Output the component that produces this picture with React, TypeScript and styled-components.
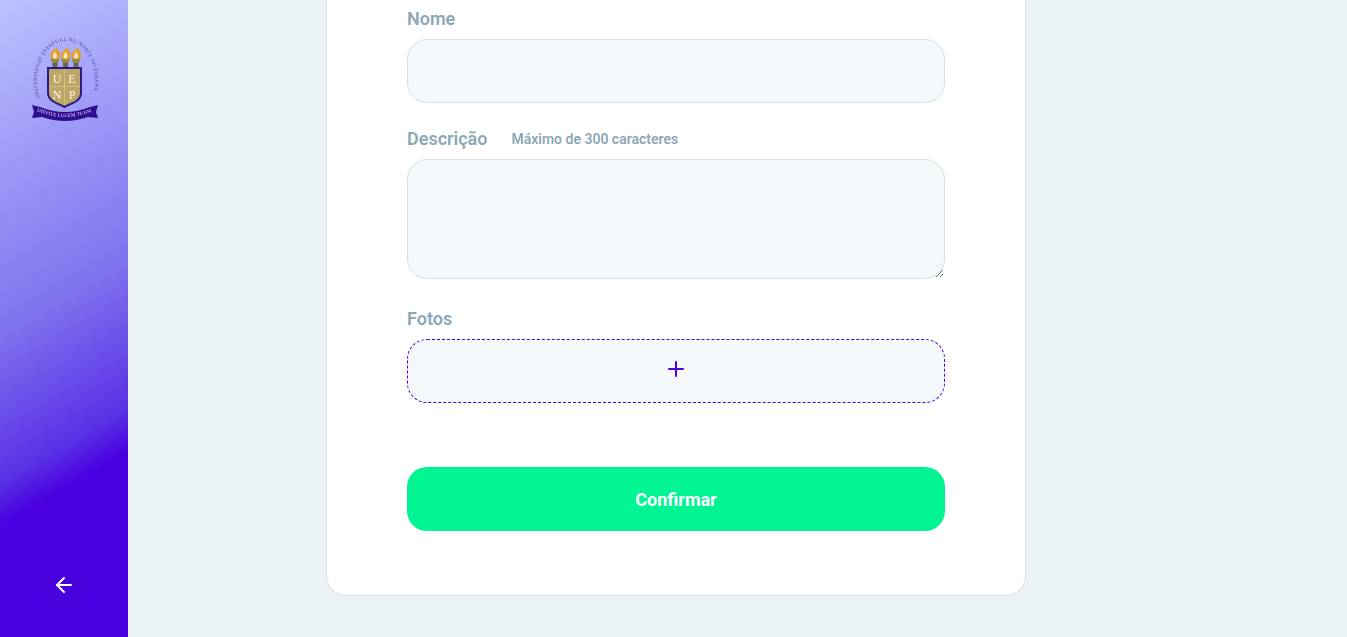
import React from 'react';
import styled, { createGlobalStyle } from 'styled-components';
import { ArrowLeft, Plus } from 'lucide-react';

const GlobalStyle = createGlobalStyle`
    * {
        box-sizing: border-box;
        margin: 0;
        padding: 0;
    }

    html, body, #root {
        height: 100%;
        overflow: hidden;
    }

    body {
        background: #ebf2f5;
        font-family: Roboto, "Liberation Sans", sans-serif;
    }
`;

const Page = styled.div`
    display: flex;
    height: 100vh;
`;

const Sidebar = styled.aside`
    flex: none;
    display: flex;
    flex-direction: column;
    align-items: center;
    justify-content: space-between;
    width: 128px;
    padding: 32px 0 28px;
    background: linear-gradient(329.54deg, #4a00e0 26%, #5a30e6 32%, #7f72ee 53%, #bcc2ff 100%);
`;

const Logo = styled.svg`
    display: block;
    width: 76px;
    height: 92px;
    filter: blur(0.4px);
`;

const BackButton = styled.button`
    display: flex;
    align-items: center;
    justify-content: center;
    width: 48px;
    height: 48px;
    border: 0;
    border-radius: 16px;
    background: #4800dc;
    color: #fff;
`;

const Main = styled.main`
    flex: 1;
    display: flex;
    flex-direction: column;
    justify-content: flex-end;
    padding: 0 0 41px 198px;
`;

const Card = styled.form`
    flex: none;
    width: 700px;
    padding: 80px 80px 64px;
    background: #fff;
    border: 1px solid #d3e2e5;
    border-radius: 20px;
`;

const Field = styled.div`
    & + & {
        margin-top: 24px;
    }
`;

const Label = styled.label`
    display: flex;
    align-items: center;
    height: 24px;
    margin-bottom: 8px;
    font-size: 18px;
    font-weight: 600;
    line-height: 24px;
    color: #8ca7b6;
`;

const Hint = styled.span`
    margin-left: 24px;
    font-size: 14px;
`;

const TextInput = styled.input`
    display: block;
    width: 100%;
    height: 64px;
    padding: 0 24px;
    background: #f5f8fa;
    border: 1px solid #d3e2e5;
    border-radius: 20px;
    outline: none;
    color: #5c8599;
    font: inherit;
`;

const TextArea = styled.textarea`
    width: 100%;
    min-height: 120px;
    height: 120px;
    padding: 16px 24px;
    background: #f5f8fa;
    border: 1px solid #d3e2e5;
    border-radius: 20px;
    outline: none;
    resize: vertical;
    color: #5c8599;
    font: inherit;
    line-height: 28px;
`;

const AddPhoto = styled.button`
    display: flex;
    align-items: center;
    justify-content: center;
    width: 100%;
    height: 64px;
    padding-bottom: 4px;
    background: #f5f8fa;
    border: 1px dashed #4a00e0;
    border-radius: 20px;
    color: #4a00e0;
`;

const ConfirmButton = styled.button`
    display: block;
    width: 100%;
    height: 64px;
    margin-top: 64px;
    background: #00f592;
    border: 0;
    border-radius: 20px;
    color: #fff;
    font-family: inherit;
    font-size: 18px;
    font-weight: 700;
`;

const UenpLogo = () => (
    <Logo viewBox="0 0 76 92">
        <defs>
            <path id="seal-arc" d="M14 66 A 29 39.5 0 1 1 66 66" />
            <path id="ribbon-arc" d="M11 79 Q 39 91 67 79" />
        </defs>
        <text fontFamily="Liberation Serif, serif" fontSize="5" fill="#47459f">
            <textPath href="#seal-arc" textLength="136" lengthAdjust="spacing">
                UNIVERSIDADE ESTADUAL DO NORTE DO PARANÁ
            </textPath>
        </text>

        {[29, 39.5, 50].map(x => (
            <g key={x}>
                <path d={`M${x - 4.5} 26.5 h9 l-1.5 4.5 h-6 z`} fill="#8f8d45" />
                <rect x={x - 2.5} y="31" width="5" height="4" fill="#66654f" />
                <path
                    d={`M${x + 1.5} 14.5 c.4 3 3.6 5 3.6 8.5 c0 2.6 -2.2 4.5 -5 4.5 c-2.6 0 -4.6 -1.8 -4.6 -4.5 c0 -3 4.6 -4.5 6 -8.5 z`}
                    fill="#e8a022"
                />
                <path
                    d={`M${x} 19.5 c.7 1.8 2.1 2.8 2.1 4.6 c0 1.4 -1 2.4 -2.1 2.4 c-1.2 0 -2.1 -1 -2.1 -2.4 c0 -1.6 1.6 -2.6 2.1 -4.6 z`}
                    fill="#f9ecc2"
                />
            </g>
        ))}

        <path d="M22 36 H55 V61 C55 69 46 71 38.5 75 C31 71 22 69 22 61 Z" fill="#bca766" stroke="#2c1a8c" strokeWidth="2" />
        <path d="M38.5 37 V73 M23 54.5 H54" stroke="#d8cb9c" strokeWidth="0.6" fill="none" />
        <text fontFamily="Liberation Serif, serif" fontSize="12" fill="#fbf6e4" textAnchor="middle">
            <tspan x="31" y="51">U</tspan>
            <tspan x="46" y="51">E</tspan>
            <tspan x="31" y="67">N</tspan>
            <tspan x="46" y="67">P</tspan>
        </text>

        <path d="M6 73 L14 75 Q 39 85 64 75 L72 73 L70 80 L72 86 L62 85 Q 39 93 16 85 L6 86 L8 80 Z" fill="#2f0f8f" />
        <text fontFamily="Liberation Serif, serif" fontSize="4.8" fill="#e9e6ff">
            <textPath href="#ribbon-arc" textLength="56" lengthAdjust="spacing">
                DIFFITE LUCEM TUAM
            </textPath>
        </text>
    </Logo>
);

export default function App() {
    return (
        <Page>
            <GlobalStyle />
            <Sidebar>
                <UenpLogo />
                <BackButton type="button">
                    <ArrowLeft size={24} />
                </BackButton>
            </Sidebar>

            <Main>
                <Card>
                    <Field>
                        <Label htmlFor="name">Nome</Label>
                        <TextInput id="name" />
                    </Field>

                    <Field>
                        <Label htmlFor="about">
                            Descrição
                            <Hint>Máximo de 300 caracteres</Hint>
                        </Label>
                        <TextArea id="about" maxLength={300} />
                    </Field>

                    <Field>
                        <Label>Fotos</Label>
                        <AddPhoto type="button">
                            <Plus size={24} />
                        </AddPhoto>
                    </Field>

                    <ConfirmButton type="submit">Confirmar</ConfirmButton>
                </Card>
            </Main>
        </Page>
    );
}
